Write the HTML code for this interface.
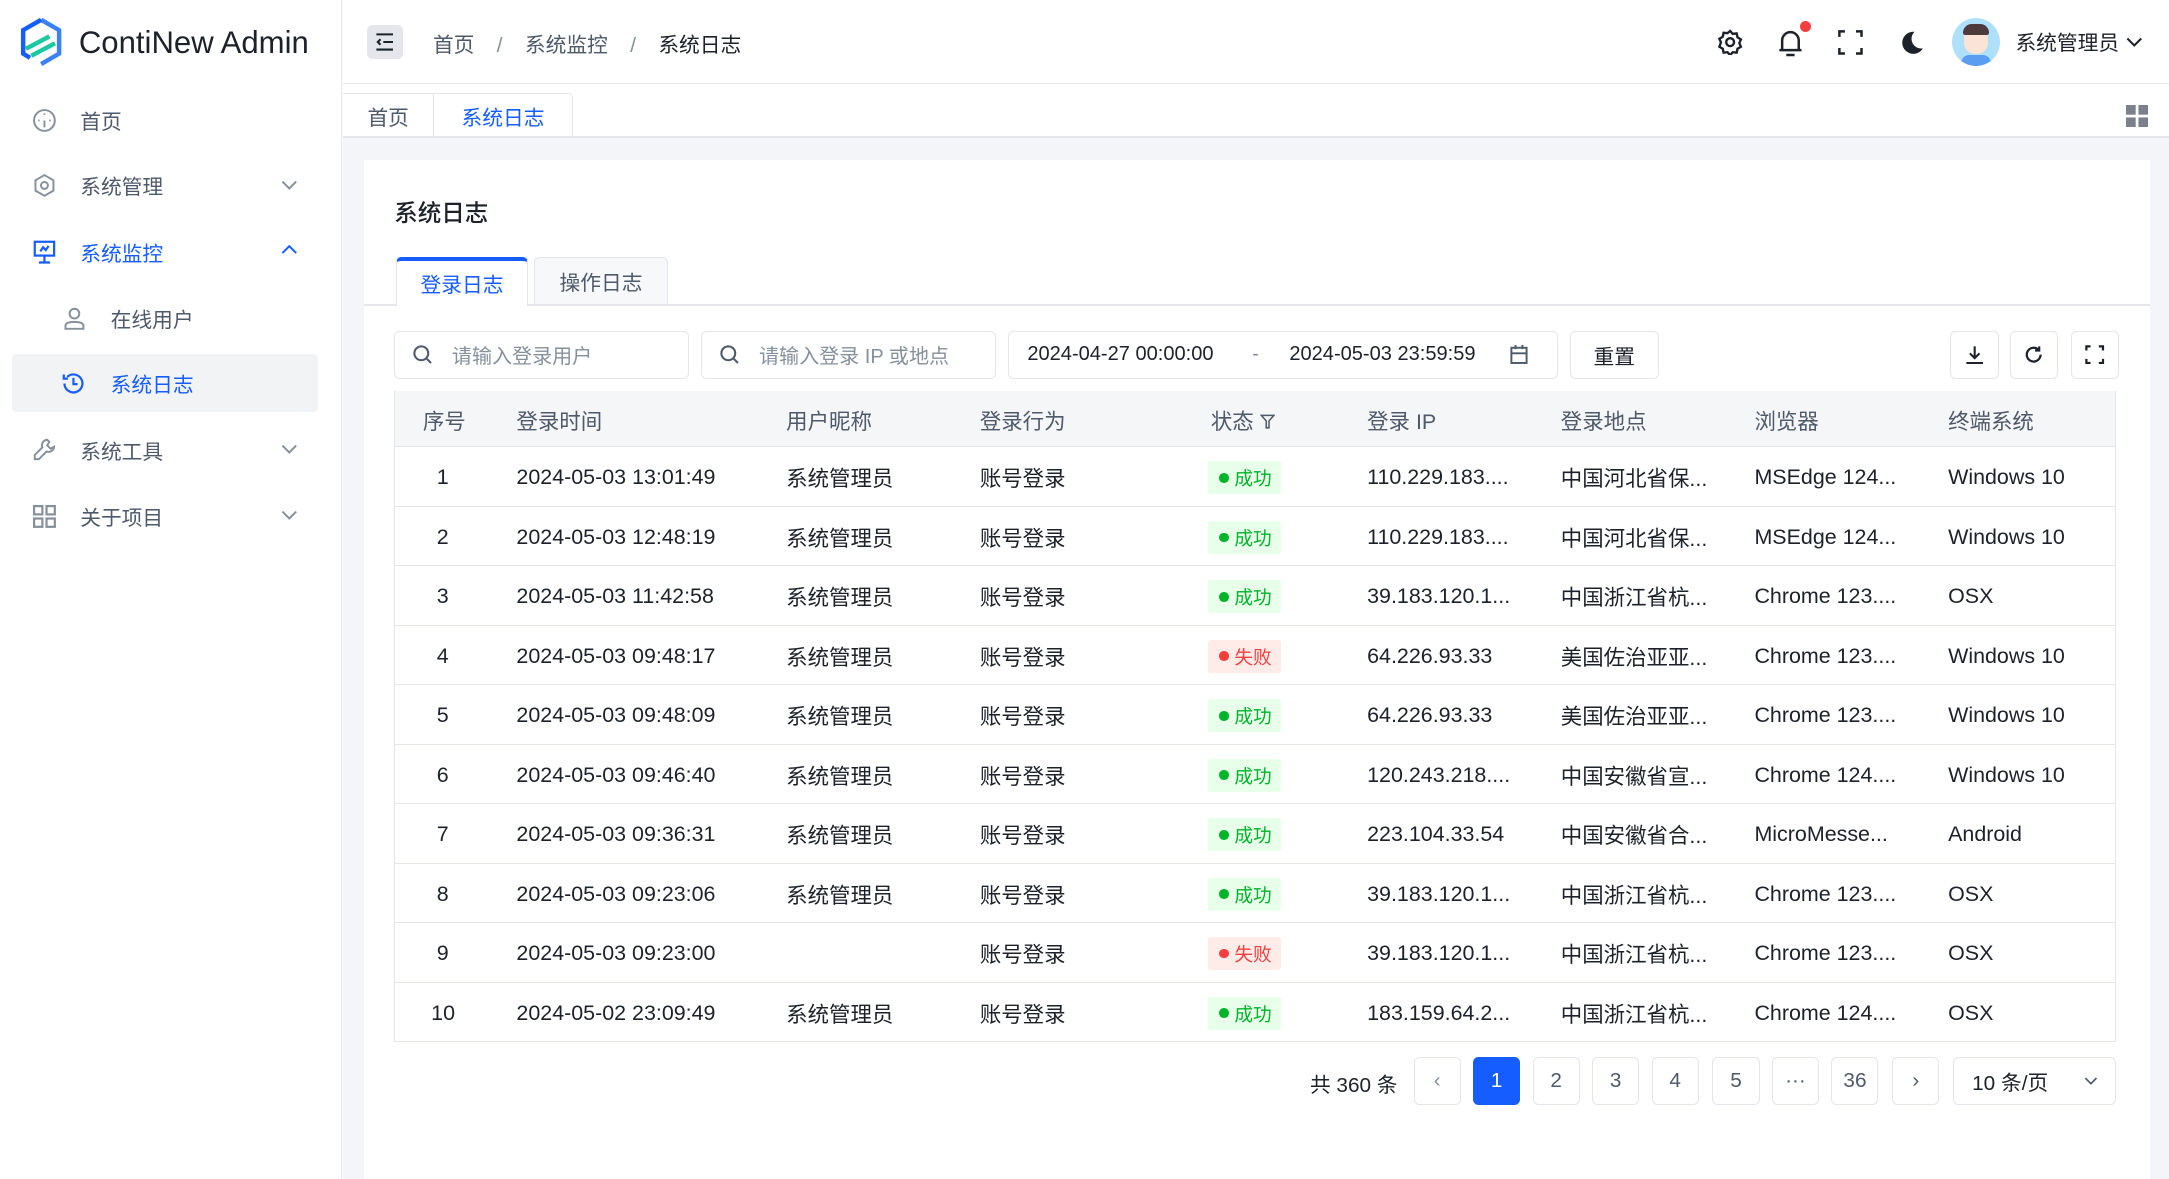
<!DOCTYPE html>
<html><head><meta charset="utf-8"><style>
*{box-sizing:border-box;margin:0;padding:0}
html,body{width:2169px;height:1179px;overflow:hidden;background:#fff}
#w{zoom:1.38329;width:1568px;height:853px;position:relative;font-family:"Liberation Sans","Noto Sans CJK SC",sans-serif;color:#1d2129;font-size:15px}
.a{position:absolute}
.side{left:0;top:0;width:247px;height:853px;background:#fff;border-right:1px solid #e5e6eb}
.mi{position:absolute;left:0;width:240px;height:44px;display:flex;align-items:center;color:#4e5969}
.mi .ic{position:absolute;left:23px;top:13px}
.mi .t{position:absolute;left:58px}
.mi .ar{position:absolute;left:203px;top:15px}
.blue{color:#165dff}
.main{left:248px;top:0;width:1320px;height:853px;background:#f4f5f9}
.hdr{left:0;top:0;width:1320px;height:61px;background:#fff;border-bottom:1px solid #e5e6eb}
.tabs{left:0;top:61px;width:1320px;height:39px;background:#fff;border-bottom:2px solid #e5e6eb}
.card{left:15px;top:116px;width:1291px;height:740px;background:#fff}
.inp{position:absolute;top:123px;height:35px;border:1px solid #e5e6eb;border-radius:4px;display:flex;align-items:center;font-size:14.5px}
.btn{position:absolute;height:35px;border:1px solid #e5e6eb;border-radius:4px;display:flex;align-items:center;justify-content:center}
table{border-collapse:collapse;position:absolute;left:22px;top:167px;width:1245px;table-layout:fixed;font-size:15.5px}
th{height:40px;background:#f5f6f8;font-weight:normal;text-align:left;color:#4e5969;border-bottom:1px solid #e5e6eb;padding-top:2px}
td{height:43px;border-bottom:1px solid #e5e6eb;white-space:nowrap;color:#1d2129;padding-top:2px}
table{border-left:1px solid #e5e6eb;border-right:1px solid #e5e6eb}
.tg{display:inline-flex;align-items:center;height:24px;padding:0 7px 0 8px;font-size:13.5px;border-radius:2px}
.ok{background:#e8ffea;color:#00b42a}.fl{background:#ffece8;color:#f53f3f}
.tg i{width:7px;height:7px;border-radius:50%;background:currentColor;margin-right:4px;display:inline-block}
.pg{position:absolute;top:648px;width:34px;height:35px;border:1px solid #e5e6eb;border-radius:4px;display:flex;align-items:center;justify-content:center;font-size:15px;color:#4e5969}
</style></head><body><div id="w">
<div class="a side">
 <svg class="a" style="left:14px;top:12px" width="32" height="36" viewBox="0 0 32 36"><path d="M16 2 L29 9.5 V26.5 L16 34" fill="none" stroke="#3b82f6" stroke-width="3.2"/><path d="M16 2 L3 9.5 V26.5 L8 29.5" fill="none" stroke="#165dff" stroke-width="3.2"/><path d="M5 23 L22 14 M9 28 L26 19" stroke="#1cc8a0" stroke-width="3.2"/></svg>
 <div class="a" style="left:57px;top:18px;font-size:22.5px;color:#1d2129">ContiNew Admin</div>
 <div class="mi" style="top:65px"><svg class="ic" width="18" height="18" viewBox="0 0 18 18" fill="none" stroke="#86909c" stroke-width="1.4"><circle cx="9" cy="9" r="7.5"/><path d="M9 9v5M9 4v1M4.5 9h1M12.5 9h1"/></svg><span class="t">首页</span></div>
 <div class="mi" style="top:112px"><svg class="ic" width="18" height="18" viewBox="0 0 18 18" fill="none" stroke="#86909c" stroke-width="1.4"><path d="M9 1.5l6.5 3.75v7.5L9 16.5l-6.5-3.75v-7.5z"/><circle cx="9" cy="9" r="2.5"/></svg><span class="t">系统管理</span><svg class="ar" width="12" height="12" viewBox="0 0 12 12"><path d="M1 4l5 5 5-5" fill="none" stroke="#86909c" stroke-width="1.4"/></svg></div>
 <div class="mi blue" style="top:160px"><svg class="ic" width="18" height="18" viewBox="0 0 18 18" fill="none" stroke="#165dff" stroke-width="1.6"><rect x="2" y="2" width="14" height="10"/><path d="M9 12v5M5 17h8M6 9l2-3 2 2 2-3"/></svg><span class="t">系统监控</span><svg class="ar" width="12" height="12" viewBox="0 0 12 12"><path d="M1 8l5-5 5 5" fill="none" stroke="#165dff" stroke-width="1.4"/></svg></div>
 <div class="mi" style="top:208px"><svg class="a" style="left:45px;top:13px" width="18" height="18" viewBox="0 0 18 18" fill="none" stroke="#86909c" stroke-width="1.4"><circle cx="9" cy="5.5" r="3.5"/><path d="M2.5 16.5v-2c0-2 2-3 6.5-3s6.5 1 6.5 3v2z"/></svg><span class="t" style="left:80px">在线用户</span></div>
 <div class="a" style="left:9px;top:256px;width:221px;height:42px;background:#f2f3f5;border-radius:3px"></div>
 <div class="mi blue" style="top:255px"><svg class="a" style="left:44px;top:13px" width="18" height="18" viewBox="0 0 18 18" fill="none" stroke="#165dff" stroke-width="1.6"><path d="M2.5 9a6.5 6.5 0 1 0 2-4.7"/><path d="M2 2.5v3h3M9 5v4.5h3"/></svg><span class="t" style="left:80px">系统日志</span></div>
 <div class="mi" style="top:303px"><svg class="ic" width="18" height="18" viewBox="0 0 18 18" fill="none" stroke="#86909c" stroke-width="1.4"><path d="M11 2a4 4 0 0 0-3.5 5.5L2 13v3h3l5.5-5.5A4 4 0 0 0 16 7l-2.5 1.5-2.5-2.5L12.5 3.5z"/></svg><span class="t">系统工具</span><svg class="ar" width="12" height="12" viewBox="0 0 12 12"><path d="M1 4l5 5 5-5" fill="none" stroke="#86909c" stroke-width="1.4"/></svg></div>
 <div class="mi" style="top:351px"><svg class="ic" width="18" height="18" viewBox="0 0 18 18" fill="none" stroke="#86909c" stroke-width="1.6"><rect x="1.5" y="1.5" width="6" height="6"/><rect x="10.5" y="1.5" width="6" height="6"/><rect x="1.5" y="10.5" width="6" height="6"/><rect x="10.5" y="10.5" width="6" height="6"/></svg><span class="t">关于项目</span><svg class="ar" width="12" height="12" viewBox="0 0 12 12"><path d="M1 4l5 5 5-5" fill="none" stroke="#86909c" stroke-width="1.4"/></svg></div>
</div>
<div class="a main">
 <div class="a hdr">
  <div class="a" style="left:17px;top:18px;width:26px;height:25px;background:#e5e6eb;border-radius:4px"><svg class="a" style="left:6px;top:6px" width="14" height="13" viewBox="0 0 14 13" stroke="#1d2129" stroke-width="1.5" fill="none"><path d="M1 1h12M6 6.5h7M1 12h12M4 4.5L2 6.5l2 2"/></svg></div>
  <div class="a" style="left:65px;top:20px;color:#4e5969">首页 <span style="margin:0 12px;color:#86909c">/</span> 系统监控 <span style="margin:0 12px;color:#86909c">/</span> <span style="color:#1d2129">系统日志</span></div>
  <svg class="a" style="left:993px;top:21px" width="19" height="19" viewBox="0 0 20 20" fill="none" stroke="#1d2129" stroke-width="1.8"><path d="M10 1.5l2 2.2 3-.3.6 3 2.6 1.5-1.2 2.8 1.2 2.8-2.6 1.5-.6 3-3-.3-2 2.2-2-2.2-3 .3-.6-3-2.6-1.5L3 10.2 1.8 7.4l2.6-1.5.6-3 3 .3z"/><circle cx="10" cy="10" r="3"/></svg>
  <svg class="a" style="left:1037px;top:20px" width="18" height="21" viewBox="0 0 18 21" fill="none" stroke="#1d2129" stroke-width="1.8"><path d="M3 16V9a6 6 0 0 1 12 0v7M1 16h16M6 19.5h6"/></svg>
  <div class="a" style="left:1053px;top:15px;width:8px;height:8px;border-radius:50%;background:#f53f3f"></div>
  <svg class="a" style="left:1081px;top:22px" width="18" height="18" viewBox="0 0 18 18" fill="none" stroke="#1d2129" stroke-width="1.8"><path d="M1 5V1h4M13 1h4v4M17 13v4h-4M5 17H1v-4"/></svg>
  <svg class="a" style="left:1124px;top:21px" width="20" height="20" viewBox="0 0 20 20"><path d="M12 2a8 8 0 1 0 6 12A7 7 0 0 1 12 2z" fill="#1d2129"/></svg>
  <div class="a" style="left:1163px;top:13px;width:35px;height:35px;border-radius:50%;background:#aee0fb;overflow:hidden"><div class="a" style="left:9px;top:6px;width:17px;height:20px;border-radius:8px;background:#fbe3d6"></div><div class="a" style="left:8px;top:4px;width:19px;height:8px;border-radius:8px 8px 2px 2px;background:#4e3b3e"></div><div class="a" style="left:7px;top:27px;width:21px;height:10px;background:#5b9df0;border-radius:6px 6px 0 0"></div></div>
  <div class="a" style="left:1209px;top:19px">系统管理员</div>
  <svg class="a" style="left:1289px;top:24px" width="12" height="12" viewBox="0 0 12 12"><path d="M1 4l5 5 5-5" fill="none" stroke="#1d2129" stroke-width="1.5"/></svg>
 </div>
 <div class="a tabs">
  <div class="a" style="left:0;top:6px;width:66px;height:33px;border-right:1px solid #e5e6eb;border-top:1px solid #e5e6eb;display:flex;align-items:center;justify-content:center;color:#4e5969">首页</div>
  <div class="a" style="left:66px;top:6px;width:100px;height:33px;border-right:1px solid #e5e6eb;border-top:1px solid #e5e6eb;border-radius:0 3px 0 0;display:flex;align-items:center;justify-content:center;color:#165dff">系统日志</div>
  <svg class="a" style="left:1289px;top:15px" width="16" height="16" viewBox="0 0 16 16" fill="#7a808c"><rect width="7" height="7"/><rect x="9" width="7" height="7"/><rect y="9" width="7" height="7"/><rect x="9" y="9" width="7" height="7"/></svg>
 </div>
 <div class="a card">
  <div class="a" style="left:22px;top:24px;font-size:17px;font-weight:500">系统日志</div>
  <div class="a" style="left:0;top:104px;width:1291px;height:1px;background:#e5e6eb"></div>
  <div class="a" style="left:23px;top:70px;width:96px;height:35px;background:#fff;border:1px solid #e5e6eb;border-top:3px solid #165dff;border-bottom:none;border-radius:4px 4px 0 0;display:flex;align-items:center;justify-content:center;color:#165dff">登录日志</div>
  <div class="a" style="left:123px;top:70px;width:97px;height:34px;background:#f7f8fa;border:1px solid #e5e6eb;border-bottom:none;border-radius:4px 4px 0 0;display:flex;align-items:center;justify-content:center;color:#4e5969">操作日志</div>
  <div class="inp" style="left:22px;width:213px;color:#86909c"><svg style="margin:0 14px 0 13px" width="14" height="14" viewBox="0 0 14 14" fill="none" stroke="#4e5969" stroke-width="1.5"><circle cx="6" cy="6" r="5"/><path d="M10 10l3 3"/></svg>请输入登录用户</div>
  <div class="inp" style="left:244px;width:213px;color:#86909c"><svg style="margin:0 14px 0 13px" width="14" height="14" viewBox="0 0 14 14" fill="none" stroke="#4e5969" stroke-width="1.5"><circle cx="6" cy="6" r="5"/><path d="M10 10l3 3"/></svg>请输入登录 IP 或地点</div>
  <div class="inp" style="left:466px;width:397px"><span style="margin-left:13px">2024-04-27 00:00:00</span><span style="margin-left:28px;color:#86909c">-</span><span style="margin-left:22px">2024-05-03 23:59:59</span><svg style="margin-left:25px" width="13" height="14" viewBox="0 0 13 14" fill="none" stroke="#4e5969" stroke-width="1.4"><rect x="1" y="2" width="11" height="11"/><path d="M1 6h11M4 0v3M9 0v3"/></svg></div>
  <div class="btn" style="left:872px;top:123px;width:64px">重置</div>
  <div class="btn" style="left:1147px;top:123px;width:35px"><svg width="14" height="14" viewBox="0 0 14 14" fill="none" stroke="#1d2129" stroke-width="1.5"><path d="M7 1v8M3.5 6L7 9.5 10.5 6M1 13h12"/></svg></div>
  <div class="btn" style="left:1190px;top:123px;width:35px"><svg width="14" height="14" viewBox="0 0 14 14" fill="none" stroke="#1d2129" stroke-width="1.6"><path d="M12 7a5 5 0 1 1-1.5-3.6M11 1v3h-3"/></svg></div>
  <div class="btn" style="left:1234px;top:123px;width:35px"><svg width="14" height="14" viewBox="0 0 14 14" fill="none" stroke="#1d2129" stroke-width="1.6"><path d="M1 4V1h3M10 1h3v3M13 10v3h-3M4 13H1v-3"/></svg></div>
  <table>
   <colgroup><col style="width:88px"><col style="width:195px"><col style="width:140px"><col style="width:165px"><col style="width:115px"><col style="width:140px"><col style="width:140px"><col style="width:140px"><col></colgroup>
   <tr><th style="padding-left:20px">序号</th><th>登录时间</th><th>用户昵称</th><th>登录行为</th><th style="padding-left:2px">状态 <svg width="11" height="11" viewBox="0 0 11 11" fill="none" stroke="#4e5969" stroke-width="1.1"><path d="M1 1h9L6.5 5v5h-2V5z"/></svg></th><th>登录 IP</th><th>登录地点</th><th>浏览器</th><th>终端系统</th></tr>
   <tr><td style="padding-left:30px">1</td><td>2024-05-03 13:01:49</td><td>系统管理员</td><td>账号登录</td><td><span class="tg ok"><i></i>成功</span></td><td>110.229.183....</td><td>中国河北省保...</td><td>MSEdge 124...</td><td>Windows 10</td></tr>
   <tr><td style="padding-left:30px">2</td><td>2024-05-03 12:48:19</td><td>系统管理员</td><td>账号登录</td><td><span class="tg ok"><i></i>成功</span></td><td>110.229.183....</td><td>中国河北省保...</td><td>MSEdge 124...</td><td>Windows 10</td></tr>
   <tr><td style="padding-left:30px">3</td><td>2024-05-03 11:42:58</td><td>系统管理员</td><td>账号登录</td><td><span class="tg ok"><i></i>成功</span></td><td>39.183.120.1...</td><td>中国浙江省杭...</td><td>Chrome 123....</td><td>OSX</td></tr>
   <tr><td style="padding-left:30px">4</td><td>2024-05-03 09:48:17</td><td>系统管理员</td><td>账号登录</td><td><span class="tg fl"><i></i>失败</span></td><td>64.226.93.33</td><td>美国佐治亚亚...</td><td>Chrome 123....</td><td>Windows 10</td></tr>
   <tr><td style="padding-left:30px">5</td><td>2024-05-03 09:48:09</td><td>系统管理员</td><td>账号登录</td><td><span class="tg ok"><i></i>成功</span></td><td>64.226.93.33</td><td>美国佐治亚亚...</td><td>Chrome 123....</td><td>Windows 10</td></tr>
   <tr><td style="padding-left:30px">6</td><td>2024-05-03 09:46:40</td><td>系统管理员</td><td>账号登录</td><td><span class="tg ok"><i></i>成功</span></td><td>120.243.218....</td><td>中国安徽省宣...</td><td>Chrome 124....</td><td>Windows 10</td></tr>
   <tr><td style="padding-left:30px">7</td><td>2024-05-03 09:36:31</td><td>系统管理员</td><td>账号登录</td><td><span class="tg ok"><i></i>成功</span></td><td>223.104.33.54</td><td>中国安徽省合...</td><td>MicroMesse...</td><td>Android</td></tr>
   <tr><td style="padding-left:30px">8</td><td>2024-05-03 09:23:06</td><td>系统管理员</td><td>账号登录</td><td><span class="tg ok"><i></i>成功</span></td><td>39.183.120.1...</td><td>中国浙江省杭...</td><td>Chrome 123....</td><td>OSX</td></tr>
   <tr><td style="padding-left:30px">9</td><td>2024-05-03 09:23:00</td><td></td><td>账号登录</td><td><span class="tg fl"><i></i>失败</span></td><td>39.183.120.1...</td><td>中国浙江省杭...</td><td>Chrome 123....</td><td>OSX</td></tr>
   <tr><td style="padding-left:26px">10</td><td>2024-05-02 23:09:49</td><td>系统管理员</td><td>账号登录</td><td><span class="tg ok"><i></i>成功</span></td><td>183.159.64.2...</td><td>中国浙江省杭...</td><td>Chrome 124....</td><td>OSX</td></tr>
  </table>
  <div class="a" style="left:684px;top:656px">共 360 条</div>
  <div class="pg" style="left:759px;color:#86909c">‹</div>
  <div class="pg" style="left:802px;background:#165dff;border-color:#165dff;color:#fff">1</div>
  <div class="pg" style="left:845px">2</div>
  <div class="pg" style="left:888px">3</div>
  <div class="pg" style="left:931px">4</div>
  <div class="pg" style="left:975px">5</div>
  <div class="pg" style="left:1018px">···</div>
  <div class="pg" style="left:1061px">36</div>
  <div class="pg" style="left:1105px">›</div>
  <div class="pg" style="left:1149px;width:118px;justify-content:flex-start;padding-left:13px;color:#1d2129">10 条/页<svg style="margin-left:26px" width="10" height="10" viewBox="0 0 10 10"><path d="M1 3l4 4 4-4" fill="none" stroke="#4e5969" stroke-width="1.2"/></svg></div>
 </div>
</div>
</div></body></html>
